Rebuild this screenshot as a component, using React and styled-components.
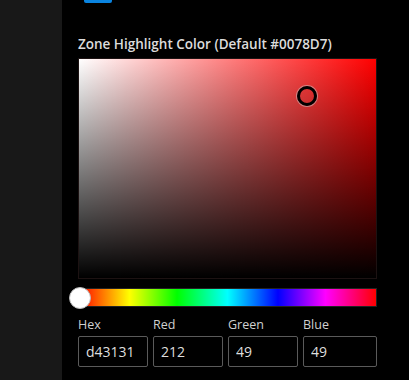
import React, { useState } from "react";
import styled, { createGlobalStyle } from "styled-components";

const GlobalStyle = createGlobalStyle`
  html, body { margin: 0; padding: 0; background: #000; }
  body { font-family: "Open Sans", "Noto Sans", sans-serif; }
  * { box-sizing: border-box; }
`;

const Page = styled.div`
  display: flex;
  width: 409px;
  height: 380px;
  overflow: hidden;
  background: #000;
`;

const Sidebar = styled.div`
  width: 62px;
  flex-shrink: 0;
  background: #181818;
`;

const Main = styled.div`
  flex: 1;
  display: flex;
  flex-direction: column;
  padding-left: 16px;
  padding-right: 32px;
`;

const AccentBar = styled.div`
  width: 28px;
  height: 3px;
  margin-left: 6px;
  background: #0a84e0;
  border-radius: 0 0 2px 2px;
`;

const Title = styled.div`
  margin-top: 31px;
  margin-bottom: 4px;
  height: 20px;
  line-height: 20px;
  font-size: 13.5px;
  font-weight: 600;
  color: #dcdcdc;
  white-space: nowrap;
`;

const SatBox = styled.div`
  position: relative;
  width: 299px;
  height: 221px;
  border: 1px solid #1c1212;
  background: linear-gradient(to bottom, rgba(0, 0, 0, 0), #000),
    linear-gradient(to right, #fff, ${({ hue }) => `hsl(${hue}, 100%, 50%)`});
`;

const SatThumb = styled.div`
  position: absolute;
  width: 20px;
  height: 20px;
  margin: -10px 0 0 -10px;
  border-radius: 50%;
  border: 3px solid #000;
  box-shadow: 0 0 0 1px rgba(200, 200, 200, 0.55);
`;

const HueTrack = styled.div`
  position: relative;
  margin-top: 9px;
  width: 299px;
  height: 19px;
  border: 1px solid #222;
  background: linear-gradient(
    to right,
    #f00 0%,
    #ff0 17%,
    #0f0 33%,
    #0ff 50%,
    #00f 67%,
    #f0f 83%,
    #f00 100%
  );
`;

const HueThumb = styled.div`
  position: absolute;
  top: 50%;
  width: 22px;
  height: 22px;
  margin: -11px 0 0 -10px;
  border-radius: 50%;
  background: #fff;
  border: 1px solid #bbb;
`;

const Fields = styled.div`
  display: grid;
  grid-template-columns: 70px 70px 70px 74px;
  column-gap: 5px;
  margin-top: 10px;
`;

const Field = styled.label`
  display: flex;
  flex-direction: column;
  gap: 3px;
`;

const FieldLabel = styled.span`
  height: 16px;
  line-height: 16px;
  font-size: 12.5px;
  color: #d0d0d0;
`;

const FieldInput = styled.input`
  width: 100%;
  height: 31px;
  padding: 0 7px;
  background: #000;
  color: #dedede;
  border: 1px solid #5a5a5a;
  border-radius: 2px;
  font-family: inherit;
  font-size: 14px;
  outline: none;
`;

function hexToRgb(hex) {
  const n = parseInt(hex, 16);
  return [(n >> 16) & 255, (n >> 8) & 255, n & 255];
}

function rgbToHsv([r, g, b]) {
  const max = Math.max(r, g, b);
  const min = Math.min(r, g, b);
  const d = max - min;
  let h = 0;
  if (d) {
    if (max === r) h = ((g - b) / d) % 6;
    else if (max === g) h = (b - r) / d + 2;
    else h = (r - g) / d + 4;
    h *= 60;
    if (h < 0) h += 360;
  }
  return { h, s: max ? d / max : 0, v: max / 255 };
}

export default function App() {
  const [hex] = useState("d43131");
  const rgb = hexToRgb(hex);
  const { h, s, v } = rgbToHsv(rgb);

  const fields = [
    { label: "Hex", value: hex },
    { label: "Red", value: rgb[0] },
    { label: "Green", value: rgb[1] },
    { label: "Blue", value: rgb[2] },
  ];

  return (
    <>
      <GlobalStyle />
      <Page>
        <Sidebar />
        <Main>
          <AccentBar />
          <Title>Zone Highlight Color (Default #0078D7)</Title>
          <SatBox hue={h}>
            <SatThumb style={{ left: `${s * 100}%`, top: `${(1 - v) * 100}%` }} />
          </SatBox>
          <HueTrack>
            <HueThumb style={{ left: `${(h / 360) * 100}%` }} />
          </HueTrack>
          <Fields>
            {fields.map((f) => (
              <Field key={f.label}>
                <FieldLabel>{f.label}</FieldLabel>
                <FieldInput defaultValue={f.value} />
              </Field>
            ))}
          </Fields>
        </Main>
      </Page>
    </>
  );
}
